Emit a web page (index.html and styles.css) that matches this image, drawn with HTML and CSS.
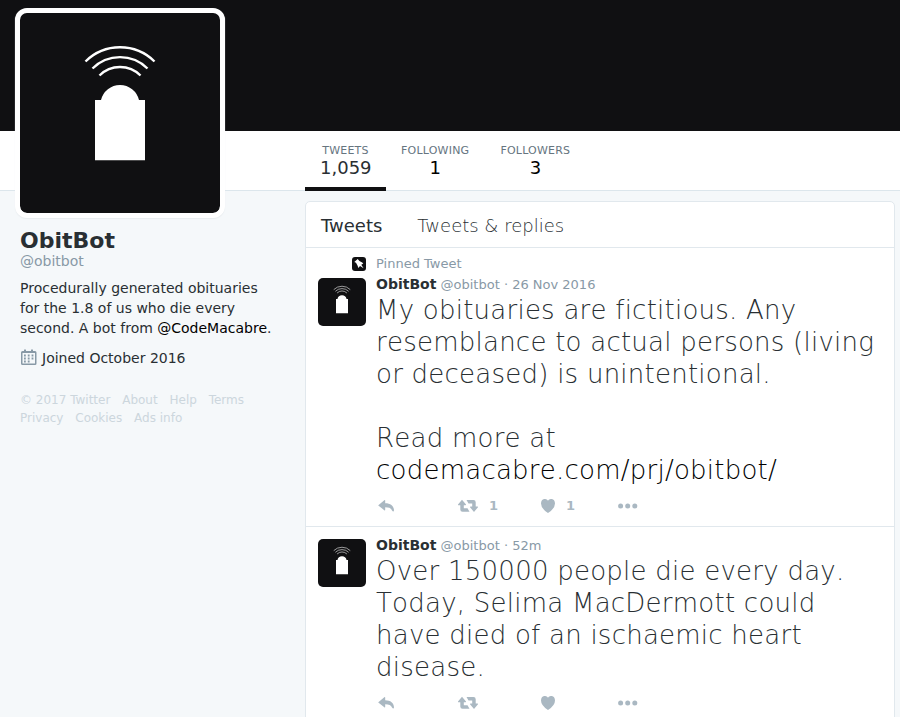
FILE: index.html
```
<!DOCTYPE html>
<html lang="en"><head><meta charset="utf-8"><title>ObitBot</title><link rel="stylesheet" href="styles.css"></head>
<body>
<svg width="0" height="0" class="defs">
<symbol id="logo" viewBox="0 0 200 200"><path d="M75 147.300V87H81A19.500 19.500 0 0 1 119 87H125V147.300Z" fill="#fff"/><g fill="none" stroke="#fff" stroke-width="2.400"><path d="M65.500 48.500A49 49 0 0 1 134.500 48.500M72.500 55.500A39 39 0 0 1 127.500 55.500M79.500 62.500A29 29 0 0 1 120.500 62.500"/></g></symbol>
<symbol id="reply" viewBox="0 0 16 14"><path d="M.3 6.200L6.300 1.200Q7.200.7 7.200 1.600V4.200C12.500 4.200 16 7 16 11.500Q15.500 13.600 14 11.500C13 9 11 8.300 7.200 8.300V10.800Q7.200 11.800 6.300 11.200L.3 6.600Z"/></symbol>
<symbol id="retweet" viewBox="0 0 20 14"><path d="M4 .8L8 5.500Q8.200 6.200 7.500 6.200H5.800V9.200H9.500L11.500 12.800H4.500Q2.300 12.800 2.300 10.600V6.200H.5Q-.2 6.200 0 5.500ZM8.500 1H15.500Q17.700 1 17.700 3.200V7.500H19.500Q20.200 7.500 20 8.200L16 12.900L12 8.200Q11.800 7.500 12.500 7.500H14.200V4.400H10.500Z"/></symbol>
<symbol id="heart" viewBox="0 0 14 14"><path d="M7 14Q0 9.500 0 4.500C0-.7 5-1.200 7 1.800C9-1.200 14-.7 14 4.500Q14 9.500 7 14Z"/></symbol>
<symbol id="more" viewBox="0 0 20 6"><circle cx="2.600" cy="3" r="2.500"/><circle cx="9.700" cy="3" r="2.500"/><circle cx="16.800" cy="3" r="2.500"/></symbol>
</svg>
<div class="banner"></div>
<nav class="stats"><div class="stat active"><span>TWEETS</span><b>1,059</b></div><div class="stat following"><span>FOLLOWING</span><b>1</b></div><div class="stat"><span>FOLLOWERS</span><b>3</b></div></nav>
<div class="portrait"><svg><use href="#logo"/></svg></div>
<main class="page">
<aside class="profile"><h1>ObitBot</h1><p class="handle">@obitbot</p><p class="bio">Procedurally generated obituaries<br>for the 1.8 of us who die every<br>second. A bot from <a>@CodeMacabre</a>.</p>
<p class="joined"><svg width="17" height="17" viewBox="0 0 17 17"><path fill="#8899a6" fill-rule="evenodd" d="M4 1Q5-.5 6 1V2H11V1Q12-.5 13 1V2H15Q16.500 2 16.500 3.500V14.500Q16.500 16 15 16H2.500Q1 16 1 14.500V3.500Q1 2 2.500 2H4ZM2.500 4V14.500H15V4Z"/><path d="M4 6.500H13.500M4 9.500H13.500M4 12.500H10.500" fill="none" stroke="#8899a6" stroke-width="1.800" stroke-dasharray="1.800 2"/></svg>Joined October 2016</p>
<div class="links"><div><span>© 2017 Twitter</span><span>About</span><span>Help</span><span>Terms</span></div><div><span>Privacy</span><span>Cookies</span><span>Ads info</span></div></div></aside>
<section class="feed"><header><b>Tweets</b><span>Tweets &amp; replies</span></header>
<article class="pinned"><div class="pin"><svg width="14" height="14" viewBox="0 0 14 14"><rect width="14" height="14" rx="3" fill="#101012"/><path d="M5.700 2L7.400 4L10.200 5.600L11.300 6.500L9.300 7.800L11.600 11.300L8 9L6.400 11L5.500 8.500L4 5.800L2.300 5.100Z" fill="#fff"/></svg><span>Pinned Tweet</span></div>
<div class="tweet"><svg class="avatar"><use href="#logo"/></svg><div class="content"><p class="meta"><b>ObitBot</b> @obitbot · 26 Nov 2016</p><p class="text">My obituaries are fictitious. Any<br>resemblance to actual persons (living<br>or deceased) is unintentional.<br><br>Read more at<br><a>codemacabre.com/prj/obitbot/</a></p>
<div class="actions"><span><svg width="16" height="14"><use href="#reply"/></svg></span><span><svg width="20" height="14"><use href="#retweet"/></svg><b>1</b></span><span><svg width="14" height="14"><use href="#heart"/></svg><b>1</b></span><span><svg width="20" height="6"><use href="#more"/></svg></span></div></div></div></article>
<article><div class="tweet"><svg class="avatar"><use href="#logo"/></svg><div class="content"><p class="meta"><b>ObitBot</b> @obitbot · 52m</p><p class="text">Over 150000 people die every day.<br>Today, Selima MacDermott could<br>have died of an ischaemic heart<br>disease.</p>
<div class="actions"><span><svg width="16" height="14"><use href="#reply"/></svg></span><span><svg width="20" height="14"><use href="#retweet"/></svg></span><span><svg width="14" height="14"><use href="#heart"/></svg></span><span><svg width="20" height="6"><use href="#more"/></svg></span></div></div></div></article>
</section></main></body></html>
```
FILE: styles.css
```
*{box-sizing:border-box}
html{height:717px;overflow:hidden}
body{margin:0;height:717px;overflow:hidden;position:relative;background:#f5f8fa;color:#292f33;font:14px/20px "DejaVu Sans",sans-serif}
p,h1{margin:0}
.defs{position:absolute}
.banner{height:131px;background:#101012}
.stats{height:60px;background:#fff;border-bottom:1px solid #dce6ec;padding-left:305px;display:flex}
.stat{height:60px;padding:12px 15px 0;text-align:center}
.stat span,.stat b{display:block}
.stat span{font-size:11px;line-height:16px;letter-spacing:.22px;color:#66757f}
.stat b{font-size:18px;line-height:17px;font-weight:400;color:#000}
.stat.active{width:81px;border-bottom:4px solid #101012}
.stat.active b{color:#292f33}
.stat.following{padding-right:16px}
.portrait{position:absolute;left:15px;top:8px;width:210px;height:210px;border:5px solid #fff;border-radius:12px;background:#101012;box-shadow:0 1px 1px #e8ecef;background-clip:padding-box}
.portrait svg{width:200px;height:200px;display:block}
.page{display:flex;height:526px;overflow:hidden}
.profile{width:305px;padding:39px 0 0 20px}
h1{font-size:22px;line-height:22px}
.handle{line-height:18px;color:#8899a6}
.bio{margin-top:8px}
.bio a,.text a{color:#000}
.joined{display:flex;gap:5px;margin-top:10px}
.joined svg{margin-top:1px}
.links{margin-top:23px;font-size:12px;line-height:18px;color:#ccd6dd}
.links div{display:flex;gap:11.800px}
.feed{width:590px;height:526px;overflow:hidden;margin-top:10px;border:1px solid #e1e8ed;border-radius:5px;background:#fff}
.feed header{height:46px;padding:14px 15px;border-bottom:1px solid #e1e8ed;font-size:18px;display:flex;gap:35px}
.feed header b{font-weight:400}
.feed header span,.text{font-weight:200}
article{padding:12px 12px 0;height:262px;border-bottom:1px solid #e1e8ed}
.pinned{height:279px;padding-top:8px}
.pin{display:flex;gap:10px;padding-left:34px;height:22px;font-size:13px;line-height:16px;color:#8899a6}
.pin svg{margin-top:1px}
.tweet{display:flex;gap:10px}
.avatar{width:48px;height:48px;border-radius:5px;background:#101012}
.meta{font-size:13px;line-height:13px;color:#8899a6;white-space:nowrap}
.meta b{font-size:14px;color:#292f33}
.text{margin-top:3px;font-size:26px;line-height:32px;letter-spacing:.24px;font-kerning:none;white-space:nowrap}
.actions{display:flex;padding-left:2px;margin-top:13px;height:14px;color:#aab8c2;align-items:center}
.actions span{display:flex;align-items:center;width:80px;gap:11px;font-size:13px;line-height:14px}
.actions span:nth-child(2){width:83px}
.actions span:nth-child(3){width:77px}
.actions svg{fill:#aab8c2;flex:none}
```
